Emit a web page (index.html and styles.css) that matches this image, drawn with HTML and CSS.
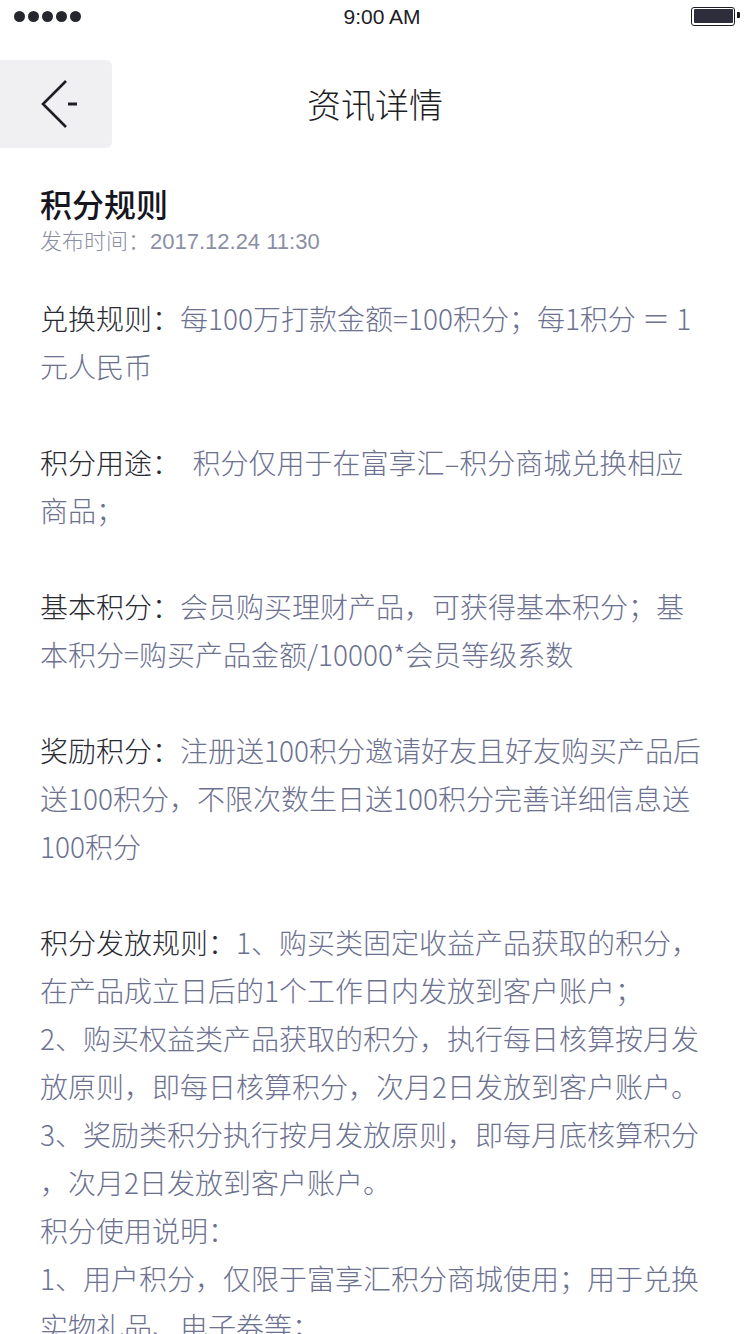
FILE: index.html
```html
<!DOCTYPE html>
<html>
	<head>
		<meta charset="UTF-8">
		<title>资讯详情</title>
		<link rel="stylesheet" href="styles.css">
	</head>
	<body>
		<div class="statusbar">
			<div class="signal">
				<span></span><span></span><span></span><span></span><span></span>
			</div>
			<div class="time">9:00 AM</div>
			<div class="battery"><i></i></div>
		</div>

		<div class="nav">
			<a class="back" href="">
				<svg width="40" height="52" viewBox="0 0 40 52">
					<polyline points="26,2 3,25 26,48" fill="none" stroke="#1d1d26" stroke-width="2.6"/>
					<line x1="28" y1="25" x2="37" y2="25" stroke="#1d1d26" stroke-width="3"/>
				</svg>
			</a>
			<h1>资讯详情</h1>
		</div>

		<div class="article">
			<h2>积分规则</h2>
			<div class="date">发布时间：2017.12.24 11:30</div>

			<div class="content">
				<p><span class="label">兑换规则：</span>每100万打款金额=100积分；每1积分 ＝ 1<br>元人民币</p>
				<p><span class="label">积分用途：</span>&nbsp;&nbsp;积分仅用于在富享汇–积分商城兑换相应<br>商品；</p>
				<p><span class="label">基本积分：</span>会员购买理财产品，可获得基本积分；基<br>本积分=购买产品金额/10000*会员等级系数</p>
				<p><span class="label">奖励积分：</span>注册送100积分邀请好友且好友购买产品后<br>送100积分，不限次数生日送100积分完善详细信息送<br>100积分</p>
				<p><span class="label">积分发放规则：</span>1、购买类固定收益产品获取的积分，<br>在产品成立日后的1个工作日内发放到客户账户；<br>2、购买权益类产品获取的积分，执行每日核算按月发<br>放原则，即每日核算积分，次月2日发放到客户账户。<br>3、奖励类积分执行按月发放原则，即每月底核算积分<br>，次月2日发放到客户账户。<br>积分使用说明：<br>1、用户积分，仅限于富享汇积分商城使用；用于兑换<br>实物礼品、电子券等；</p>
			</div>
		</div>
	</body>
</html>
```

FILE: styles.css
```css
html, body {
	margin: 0;
	padding: 0;
	background: #fff;
}
body {
	width: 750px;
	height: 1334px;
	overflow: hidden;
	font-family: "Noto Sans CJK SC", "Liberation Sans", sans-serif;
	color: #1d1d26;
}

/* 状态栏 */
.statusbar {
	height: 40px;
	display: flex;
	align-items: center;
	justify-content: space-between;
	padding: 0 11px 0 14px;
}
.signal {
	display: flex;
	gap: 3px;
	margin-top: -8px;
}
.signal span {
	width: 11px;
	height: 11px;
	border-radius: 50%;
	background: #26262f;
}
.time {
	font-family: "Liberation Sans", sans-serif;
	font-size: 21px;
	color: #1d1d26;
	margin-top: -6px;
	margin-left: -8px;
}
.battery {
	width: 39px;
	height: 14px;
	border: 1.5px solid #1d1d26;
	border-radius: 3px;
	padding: 1.5px;
	position: relative;
	margin-top: -8px;
	margin-right: 4px;
}
.battery i {
	display: block;
	height: 100%;
	background: #2e2d3b;
	border-radius: 1px;
}
.battery:after {
	content: "";
	position: absolute;
	right: -6px;
	top: 4px;
	width: 3px;
	height: 6px;
	background: #1d1d26;
	border-radius: 0 1px 1px 0;
}

/* 导航 */
.nav {
	margin-top: 20px;
	height: 88px;
	display: flex;
	align-items: center;
	position: relative;
}
.back {
	width: 112px;
	height: 88px;
	background: #f0f0f2;
	border-radius: 0 6px 6px 0;
	display: flex;
	align-items: center;
	padding-left: 40px;
	box-sizing: border-box;
}
.back svg {
	display: block;
	margin-top: 2px;
}
.nav h1 {
	position: absolute;
	left: 0;
	right: 0;
	margin: 0;
	text-align: center;
	font-size: 34px;
	font-weight: 300;
	line-height: 88px;
	color: #1d1d26;
	pointer-events: none;
}

/* 正文 */
.article {
	padding: 0 40px;
}
.article h2 {
	margin: 35px 0 0;
	font-size: 32px;
	line-height: 40px;
	font-weight: 500;
	color: #16161e;
}
.date {
	margin-top: 4px;
	font-family: "Liberation Sans", "Noto Sans CJK SC", sans-serif;
	font-size: 22px;
	line-height: 30px;
	font-weight: 300;
	color: #8b8fa5;
}
.content {
	margin-top: 37px;
}
.content p {
	margin: 0 0 48px;
	font-size: 28px;
	line-height: 48px;
	font-weight: 300;
	color: #6d7190;
	white-space: nowrap;
}
.content .label {
	color: #2a2a33;
}
```
